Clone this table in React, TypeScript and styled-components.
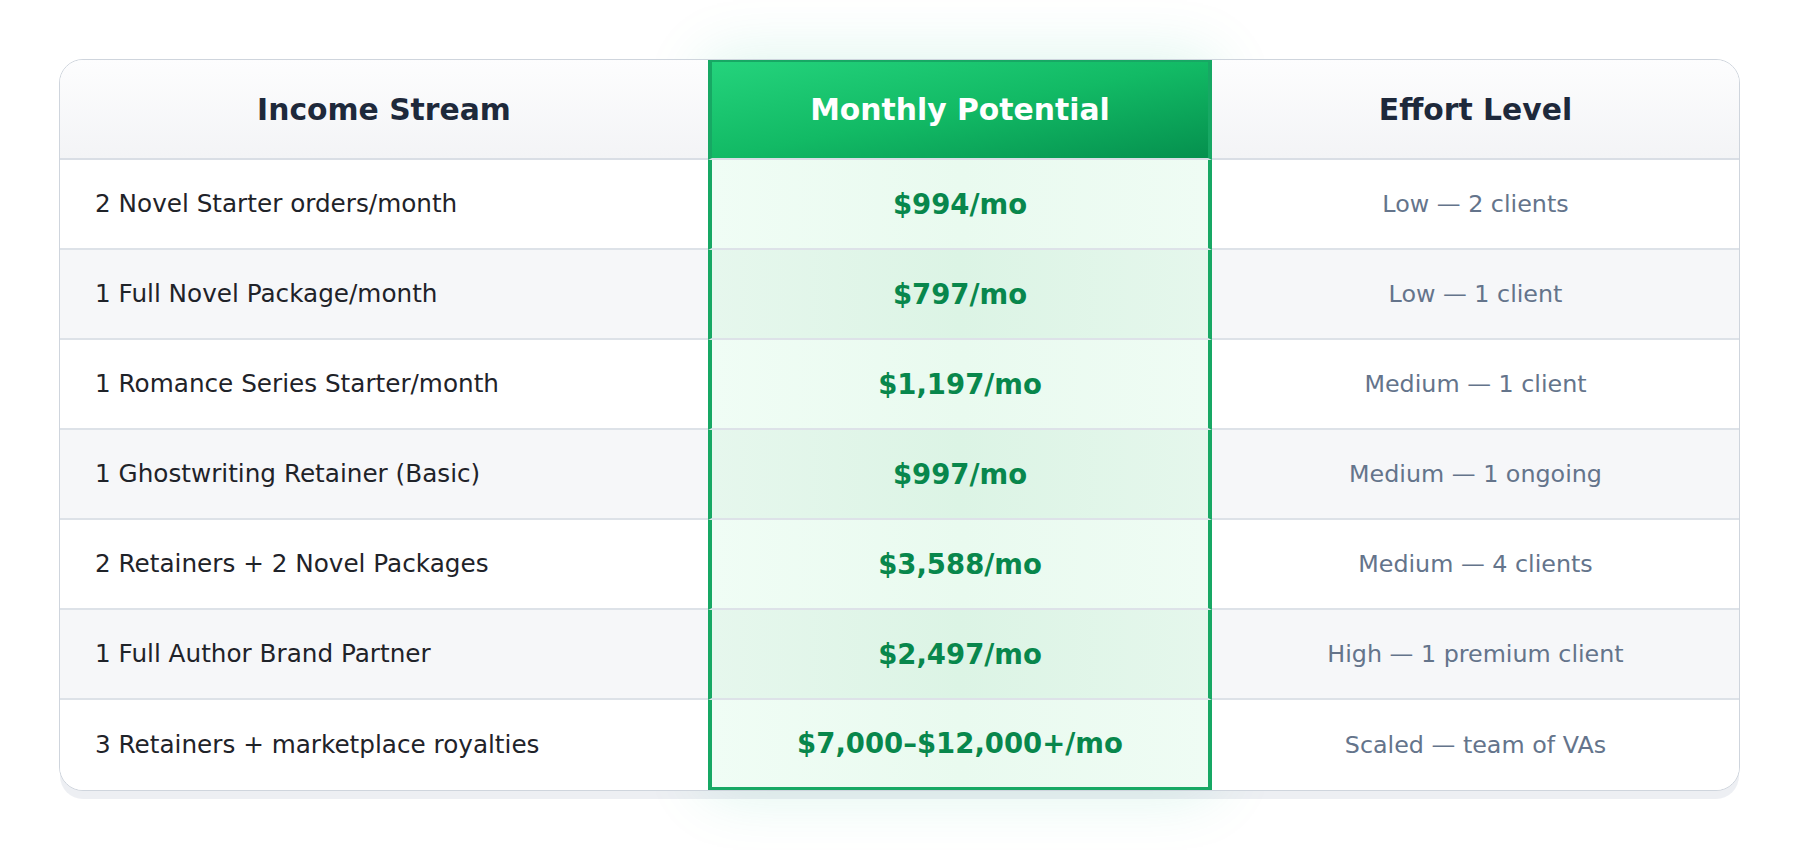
import React from 'react';
import styled, { createGlobalStyle } from 'styled-components';

const GlobalStyle = createGlobalStyle`
  html, body {
    margin: 0;
    padding: 0;
    background: #ffffff;
  }
  body {
    font-family: "DejaVu Sans", Verdana, sans-serif;
  }
  *, *::before, *::after {
    box-sizing: border-box;
  }
`;

const COLS = '648px 504px 1fr';
const GREEN_EDGE = '#17a864';
const ROW_LINE = '#dde2e8';

const Page = styled.main`
  padding: 59px 60px 59px 59px;
`;

const Frame = styled.div`
  display: grid;
  grid-template-columns: 649px 504px 1fr;
  isolation: isolate;
`;

const Glow = styled.div`
  grid-column: 2;
  grid-row: 1;
  z-index: 0;
  box-shadow: 0 0 60px rgba(16, 185, 129, 0.16);
`;

const Card = styled.section`
  grid-column: 1 / -1;
  grid-row: 1;
  z-index: 1;
  border: 1px solid #cfd5dd;
  border-radius: 24px;
  overflow: hidden;
  background: #ffffff;
  box-shadow: 0 9px 0 -1px rgba(148, 163, 184, 0.17);
`;

const HeaderRow = styled.div`
  display: grid;
  grid-template-columns: ${COLS};
  height: 100px;
`;

const HeadCell = styled.div`
  display: flex;
  align-items: center;
  justify-content: center;
  background: linear-gradient(180deg, #fdfdfe 0%, #f3f4f6 100%);
  border-bottom: 2px solid #d9dee5;
  color: #1e293b;
  font-size: 29.8px;
  font-weight: 700;
`;

const HighlightHeadCell = styled(HeadCell)`
  padding-bottom: 2px;
  background: linear-gradient(to bottom right, #24d37c 0%, #12ba65 50%, #05904e 100%);
  border-top: 2px solid ${GREEN_EDGE};
  border-left: 4px solid ${GREEN_EDGE};
  border-right: 4px solid ${GREEN_EDGE};
  color: #ffffff;
`;

const Row = styled.div<{ $striped: boolean }>`
  display: grid;
  grid-template-columns: ${COLS};
  height: 90px;
  background: ${(p) => (p.$striped ? '#f6f7f9' : '#ffffff')};
`;

const BaseCell = styled.div<{ $last: boolean }>`
  display: flex;
  align-items: center;
  padding-bottom: 1px;
  border-bottom: ${(p) => (p.$last ? 'none' : `2px solid ${ROW_LINE}`)};
`;

const LabelCell = styled(BaseCell)`
  padding-left: 35px;
  padding-right: 35px;
  color: #1f2329;
  font-size: 24.7px;
`;

const AmountCell = styled(BaseCell)<{ $striped: boolean }>`
  justify-content: center;
  border-left: 4px solid ${GREEN_EDGE};
  border-right: 4px solid ${GREEN_EDGE};
  ${(p) => (p.$last ? `border-bottom: 3px solid ${GREEN_EDGE};` : '')}
  background: ${(p) =>
    p.$striped
      ? 'linear-gradient(90deg, #e6f7ed 0%, #dcf4e5 50%, #e5f7ec 100%)'
      : 'linear-gradient(90deg, #f0fdf5 0%, #e9faef 50%, #effcf4 100%)'};
  color: #08874c;
  font-size: 27.5px;
  font-weight: 700;
`;

const EffortCell = styled(BaseCell)`
  justify-content: center;
  color: #64748b;
  font-size: 23.8px;
`;

const rows: [string, string, string][] = [
  ['2 Novel Starter orders/month', '$994/mo', 'Low — 2 clients'],
  ['1 Full Novel Package/month', '$797/mo', 'Low — 1 client'],
  ['1 Romance Series Starter/month', '$1,197/mo', 'Medium — 1 client'],
  ['1 Ghostwriting Retainer (Basic)', '$997/mo', 'Medium — 1 ongoing'],
  ['2 Retainers + 2 Novel Packages', '$3,588/mo', 'Medium — 4 clients'],
  ['1 Full Author Brand Partner', '$2,497/mo', 'High — 1 premium client'],
  ['3 Retainers + marketplace royalties', '$7,000–$12,000+/mo', 'Scaled — team of VAs'],
];

export default function App() {
  return (
    <>
      <GlobalStyle />
      <Page>
        <Frame>
          <Glow />
          <Card>
            <HeaderRow>
              <HeadCell>Income Stream</HeadCell>
              <HighlightHeadCell>Monthly Potential</HighlightHeadCell>
              <HeadCell>Effort Level</HeadCell>
            </HeaderRow>
            {rows.map(([label, amount, effort], i) => {
              const striped = i % 2 === 1;
              const last = i === rows.length - 1;
              return (
                <Row key={label} $striped={striped}>
                  <LabelCell $last={last}>{label}</LabelCell>
                  <AmountCell $last={last} $striped={striped}>
                    {amount}
                  </AmountCell>
                  <EffortCell $last={last}>{effort}</EffortCell>
                </Row>
              );
            })}
          </Card>
        </Frame>
      </Page>
    </>
  );
}
